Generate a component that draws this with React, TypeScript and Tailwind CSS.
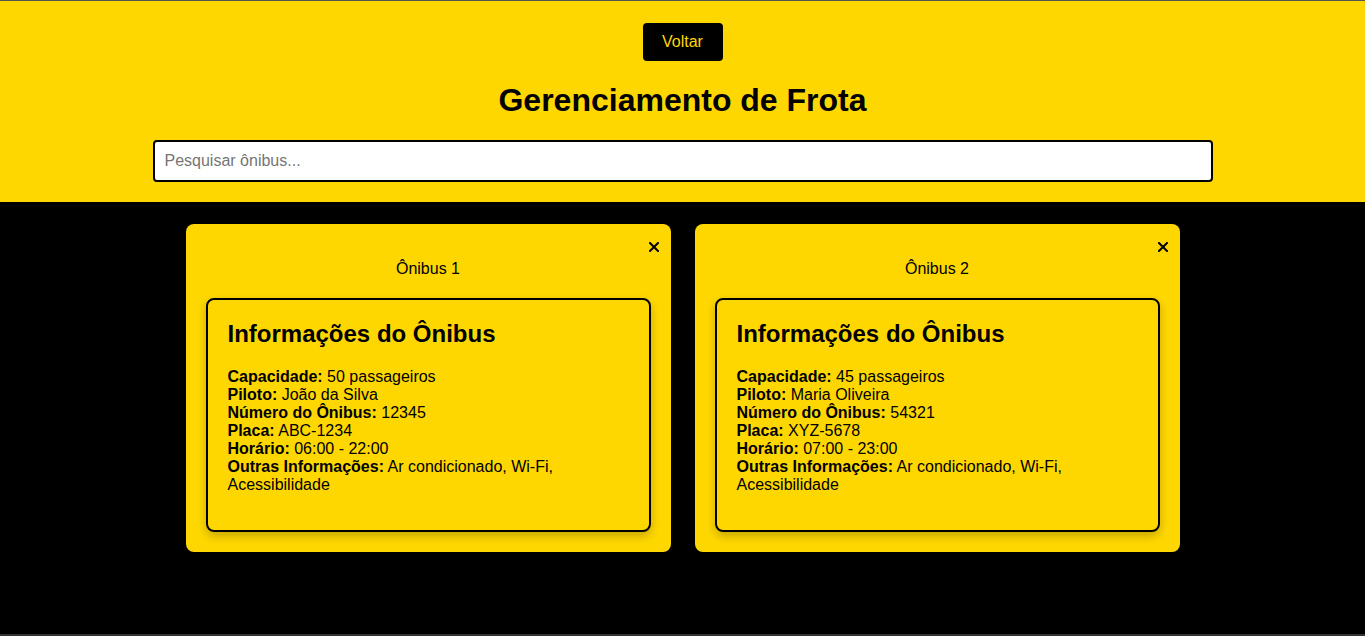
const BUSES = [
  {
    name: "Ônibus 1",
    capacidade: "50 passageiros",
    piloto: "João da Silva",
    numero: "12345",
    placa: "ABC-1234",
    horario: "06:00 - 22:00",
    outras: "Ar condicionado, Wi-Fi, Acessibilidade",
  },
  {
    name: "Ônibus 2",
    capacidade: "45 passageiros",
    piloto: "Maria Oliveira",
    numero: "54321",
    placa: "XYZ-5678",
    horario: "07:00 - 23:00",
    outras: "Ar condicionado, Wi-Fi, Acessibilidade",
  },
];

function Close() {
  return (
    <button className="w-[14px] h-[14px] flex items-center justify-center" aria-label="Remover">
      <svg width="10" height="10" viewBox="0 0 10 10">
        <path d="M1 1L9 9M9 1L1 9" stroke="#000" strokeWidth="2" strokeLinecap="square" />
      </svg>
    </button>
  );
}

function BusCard({ bus }: { bus: (typeof BUSES)[number] }) {
  const rows: [string, string][] = [
    ["Capacidade:", bus.capacidade],
    ["Piloto:", bus.piloto],
    ["Número do Ônibus:", bus.numero],
    ["Placa:", bus.placa],
    ["Horário:", bus.horario],
    ["Outras Informações:", bus.outras],
  ];
  return (
    <div className="w-[485px] h-[328px] bg-[#FFD700] rounded-[8px] px-[20px] pt-[16px] pb-[20px] flex flex-col">
      <div className="flex justify-end -mr-[10px] h-[14px]">
        <Close />
      </div>
      <p className="text-center text-[16px] leading-[18px] mt-[6px]">{bus.name}</p>
      <div className="mt-[20px] border-2 border-black rounded-[8px] p-[20px] h-[234px] shadow-[0_4px_10px_rgba(0,0,0,0.22)]">
        <h2 className="text-[24px] leading-[28px] font-bold">Informações do Ônibus</h2>
        <div className="mt-[20px] text-[16px] leading-[18px]">
          {rows.map(([k, v]) => (
            <div key={k}>
              <span className="font-bold">{k}</span> {v}
            </div>
          ))}
        </div>
      </div>
    </div>
  );
}

export default function App() {
  return (
    <div className="min-h-[636px] bg-black text-black font-['Liberation_Sans',Arial,sans-serif] flex flex-col">
      <div className="h-[1px] bg-[#555]" />
      <header className="bg-[#FFD700] pt-[22px] pb-[20px] flex flex-col items-center">
        <button className="w-[80px] h-[38px] bg-black text-[#FFD700] text-[16px] rounded-[4px]">
          Voltar
        </button>
        <h1 className="text-[32px] leading-[37px] font-bold mt-[21px] mb-[21px]">
          Gerenciamento de Frota
        </h1>
        <input
          type="text"
          placeholder="Pesquisar ônibus..."
          className="w-[1060px] h-[42px] bg-white border-2 border-black rounded-[4px] px-[10px] text-[16px] placeholder:text-[#757575] outline-none"
        />
      </header>
      <main className="flex-1 flex justify-center gap-[24px] pt-[22px]">
        {BUSES.map((b) => (
          <BusCard key={b.name} bus={b} />
        ))}
      </main>
      <div className="h-[2px] bg-[#333]" />
    </div>
  );
}
